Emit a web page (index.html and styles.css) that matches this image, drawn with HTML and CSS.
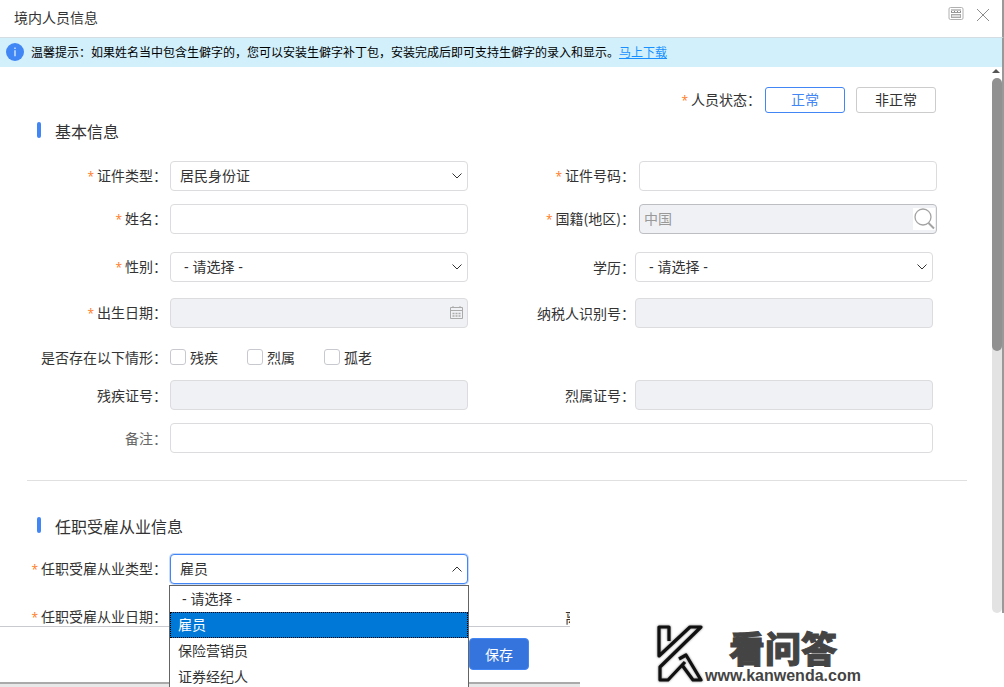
FILE: index.html
```html
<!DOCTYPE html>
<html lang="zh-CN">
<head>
<meta charset="utf-8">
<title>境内人员信息</title>
<link rel="stylesheet" href="styles.css">
</head>
<body>
<div class="dialog">
  <header class="titlebar">
    <h1 class="titlebar-text">境内人员信息</h1>
    <button class="icon-btn" type="button" aria-label="还原">
      <svg width="16" height="14" viewBox="0 0 16 14" fill="none"><rect x="1" y=".5" width="14" height="12" rx="1.5" stroke="#b0b0b0"/><path d="M3 3h10" stroke="#888"/><path d="M3 4.500h10" stroke="#888" stroke-dasharray="1 2"/><path d="M3 5.500h10" stroke="#999"/><rect x="3.500" y="7.500" width="9" height="3" fill="#ddd" stroke="#aaa"/></svg>
    </button>
    <button class="icon-btn" type="button" aria-label="关闭">
      <svg width="14" height="14" viewBox="0 0 14 14" fill="none" stroke="#8c8c8c"><path d="M1 1l12 12M13 1L1 13"/></svg>
    </button>
  </header>
  <div class="tip">
    <svg width="18" height="18" viewBox="0 0 18 18"><circle cx="9" cy="9" r="9" fill="#4086f4"/><path d="M8.3 4.5h1.4v1.5H8.3zM8.3 7.3h1.4v6H8.3z" fill="#d4e6ff"/></svg>
    <p class="tip-text">温馨提示：如果姓名当中包含生僻字的，您可以安装生僻字补丁包，安装完成后即可支持生僻字的录入和显示。<a class="tip-link" href="#">马上下载</a></p>
  </div>
  <div class="body">
    <form class="form" id="person">
      <div class="status">
        <span class="label-text"><i class="star">*</i>人员状态：</span>
        <button class="toggle toggle-on" type="button">正常</button>
        <button class="toggle" type="button">非正常</button>
      </div>
      <h2 class="section">基本信息</h2>
      <div class="row row-wide">
        <label class="label" for="idtype"><i class="star">*</i>证件类型：</label>
        <select class="control select" id="idtype"><option>居民身份证</option></select>
        <label class="label" for="idno"><i class="star">*</i>证件号码：</label>
        <input class="control" id="idno" type="text">
      </div>
      <div class="row row-wide row-loose">
        <label class="label" for="name"><i class="star">*</i>姓名：</label>
        <input class="control" id="name" type="text">
        <label class="label" for="country"><i class="star">*</i>国籍(地区)：</label>
        <div class="with-icon">
          <input class="control control-lookup" id="country" type="text" value="中国" disabled>
          <button class="lookup" type="button" aria-label="查找"><svg width="22" height="22" viewBox="0 0 22 22" fill="none" stroke="#a3a3a3"><circle cx="10" cy="9" r="8" stroke-width="1.3"/><path d="M15.500 15l5.500 5.500" stroke-width="2"/></svg></button>
        </div>
      </div>
      <div class="row row-medium">
        <label class="label" for="sex"><i class="star">*</i>性别：</label>
        <select class="control select" id="sex"><option>&nbsp;- 请选择 -</option></select>
        <label class="label" for="edu">学历：</label>
        <select class="control select" id="edu"><option>&nbsp;- 请选择 -</option></select>
      </div>
      <div class="row row-loose">
        <label class="label" for="birth"><i class="star">*</i>出生日期：</label>
        <div class="with-icon">
          <input class="control" id="birth" type="text" disabled>
          <svg class="calendar" width="13" height="13" viewBox="0 0 13 13" fill="none" stroke="#aaa"><path d="M.5 1.500h12v11H.5zM.5 4.500h12" /><path d="M3 0v2M10 0v2"/><path d="M2.500 7.500h8M2.500 10h8" stroke-width="1.500" stroke-dasharray="2 1"/></svg>
        </div>
        <label class="label" for="tax">纳税人识别号：</label>
        <input class="control" id="tax" type="text" disabled>
      </div>
      <div class="row">
        <span class="label">是否存在以下情形：</span>
        <div class="checks">
          <label class="check"><input class="box" type="checkbox">残疾</label>
          <label class="check"><input class="box" type="checkbox">烈属</label>
          <label class="check"><input class="box" type="checkbox">孤老</label>
        </div>
      </div>
      <div class="row">
        <label class="label" for="disno">残疾证号：</label>
        <input class="control" id="disno" type="text" disabled>
        <label class="label" for="marno">烈属证号：</label>
        <input class="control" id="marno" type="text" disabled>
      </div>
      <div class="row">
        <label class="label label-soft" for="memo">备注：</label>
        <input class="control control-full" id="memo" type="text">
      </div>
      <hr class="divider">
      <h2 class="section section-job">任职受雇从业信息</h2>
      <div class="row row-job">
        <label class="label" for="job"><i class="star">*</i>任职受雇从业类型：</label>
        <div class="with-icon">
          <select class="control select select-open" id="job"><option>雇员</option></select>
          <ul class="menu" role="listbox">
            <li class="option" role="option">&nbsp;- 请选择 -</li>
            <li class="option option-on" role="option" aria-selected="true">雇员</li>
            <li class="option" role="option">保险营销员</li>
            <li class="option" role="option">证券经纪人</li>
          </ul>
        </div>
      </div>
      <div class="row">
        <span class="label"><i class="star">*</i>任职受雇从业日期：</span>
        <div></div>
        <span class="cut">离</span>
      </div>
    </form>
    <div class="scrollbar"><span class="scroll-up"></span><span class="thumb"></span></div>
  </div>
  <footer class="footer">
    <button class="save" type="submit" form="person">保存</button>
  </footer>
  <div class="under"></div>
  <div class="brand">
    <svg class="brand-mark" width="49" height="62" viewBox="0 0 49 62" fill="none" stroke="#111" stroke-width="3.200" stroke-linejoin="round"><path d="M14 19V5H4v29L35 5h11L5 45v13h8l17-18"/><path d="M24 37l7-4 15 25h-8L27 43"/></svg>
    <div class="brand-words"><strong class="brand-name">看问答</strong><span class="brand-url">www.kanwenda.com</span></div>
  </div>
</div>
</body>
</html>
```
FILE: styles.css
```css
* { box-sizing: border-box; }
body {
  margin: 0;
  font: 14px/20px "Noto Sans CJK SC", sans-serif;
  color: #333;
  background: #fff;
}
button, input, select { font: inherit; color: inherit; }
.dialog {
  position: relative;
  display: flex;
  flex-direction: column;
  height: 100vh;
  overflow: hidden;
}
.titlebar {
  display: flex;
  align-items: flex-start;
  gap: 12px;
  height: 38px;
  flex: none;
  padding: 7px 12px 0 14px;
  border-right: 2px solid #999;
  border-bottom: 1px solid #d3dde2;
}
.titlebar-text { flex: 1; margin: 0; font-size: 14px; font-weight: 400; }
.icon-btn { display: flex; padding: 0; border: 0; background: none; }
.icon-btn + .icon-btn { padding-top: 1px; }
.tip {
  display: flex;
  align-items: center;
  gap: 7px;
  flex: none;
  height: 29px;
  padding: 0 6px 2px;
  border-right: 2px solid #999;
  background: #d2f0fc;
}
.tip-text { margin: 0; font-size: 12px; color: #000; }
.tip-link { color: #1890ff; }
.body { display: flex; flex: 1; min-height: 0; }
.form { flex: 1; padding-top: 20px; }
.status {
  display: flex;
  align-items: center;
  justify-content: flex-end;
  padding-right: 56px;
}
.toggle {
  width: 80px;
  height: 26px;
  margin-left: 11px;
  padding: 0 0 2px;
  border: 1px solid #ccc;
  border-radius: 3px;
  background: #fff;
  line-height: 20px;
}
.toggle-on { margin-left: 4px; border-color: #4285f4; color: #4285f4; }
.star { margin-right: 3px; font-style: normal; font-family: "Open Sans", sans-serif; font-size: 12px; color: #ff7a1a; }
.section {
  display: flex;
  align-items: center;
  gap: 14px;
  margin: 5px 0 17px 37px;
  font-size: 16px;
  line-height: 26px;
  font-weight: 400;
}
.section-job { margin-bottom: 15px; }
.section::before { content: ""; width: 4px; height: 16px; margin-bottom: 2px; border-radius: 2px; background: #4285f4; }
.row {
  display: grid;
  grid-template-columns: 170px 1fr 167px 1fr;
  align-items: center;
  margin-bottom: 13px;
  padding-right: 59px;
}
.row-wide { grid-template-columns: 170px 1fr 171px 1fr; padding-right: 55px; }
.row-loose { margin-bottom: 18px; }
.row-medium { margin-bottom: 16px; }
.label { padding-right: 3px; text-align: right; white-space: nowrap; }
.control ~ .label, .with-icon ~ .label { padding-right: 0; }
.row-wide .control ~ .label { padding-right: 4px; }
.label-soft { color: #666; }
.control {
  display: block;
  width: 100%;
  height: 30px;
  min-width: 0;
  padding: 0 9px;
  border: 1px solid #dcdcde;
  border-radius: 4px;
  background: #fff;
}
.control:disabled { background: #f0f1f5; }
.control-full { grid-column: 2 / 5; }
.control-lookup:disabled { padding: 0 4px 2px; border-color: #bdbec2; color: #999; }
.select {
  appearance: none;
  font-family: "Liberation Sans", "Noto Sans CJK SC", sans-serif;
  background: #fff url("data:image/svg+xml,%3Csvg xmlns='http://www.w3.org/2000/svg' width='10' height='6' fill='none' stroke='%23333'%3E%3Cpath d='M.5 .5L5 5L9.500 .5'/%3E%3C/svg%3E") no-repeat right 5px center;
}
.select-open {
  border-color: #4285f4;
  box-shadow: 0 0 0 1px #c6dafb;
  background-image: url("data:image/svg+xml,%3Csvg xmlns='http://www.w3.org/2000/svg' width='10' height='6' fill='none' stroke='%23333'%3E%3Cpath d='M.5 5.500L5 1L9.500 5.500'/%3E%3C/svg%3E");
}
.with-icon { position: relative; }
.lookup { position: absolute; right: 2px; top: 4px; display: flex; padding: 0; border: 0; background: #fff; }
.calendar { position: absolute; right: 5px; top: 8px; }
.checks { display: flex; gap: 29px; }
.check { display: flex; align-items: center; gap: 4px; height: 21px; white-space: nowrap; }
.box { appearance: none; width: 16px; height: 16px; margin: 0; border: 1px solid #c8c9cf; border-radius: 3px; }
.divider { margin: 27px 25px 32px 27px; border: 0; border-top: 1px solid #e0e0e0; }
.row-job { margin-bottom: 22px; }
.menu {
  position: absolute;
  z-index: 5;
  top: 31px;
  left: -1px;
  right: -1px;
  margin: 0;
  padding: 0;
  border: 1px solid #646464;
  background: #fff;
  font-family: "Liberation Sans", "Noto Sans CJK SC", sans-serif;
  list-style: none;
}
.option { padding: 3px 8px; }
.option-on { color: #fff; background: #0078d7; outline: 1px dotted #000; outline-offset: -1px; }
.cut { width: 5px; margin-left: 97px; overflow: hidden; }
.scrollbar { flex: none; width: 12px; padding-top: 2px; border-right: 2px solid #999; background: #fff; }
.scroll-up { display: block; height: 4px; margin: 0 2px 5px 0; background: #555; clip-path: polygon(50% 0, 100% 100%, 0 100%); }
.thumb { display: block; height: 273px; border-radius: 5px; background: #919191; box-shadow: 0 262px 0 #e3e3e3; }
.footer {
  flex: none;
  height: 56px;
  padding: 11px 0 0 469px;
  border-top: 1px solid #c9cad0;
  background: #fff;
}
.save { width: 60px; height: 32px; padding: 0; border: 1px solid #4285f4; border-radius: 4px; background: #3574dc; color: #fff; }
.under { position: relative; z-index: 1; flex: none; width: 580px; height: 5px; border-top: 2px solid #aaa; background: #e8e8e8; }
.brand {
  position: absolute;
  right: 0;
  bottom: 0;
  left: 570px;
  display: flex;
  gap: 1px;
  height: 74px;
  padding: 9px 0 0 85px;
  background: #fff;
}
.brand-mark { flex: none; filter: drop-shadow(0 0 1px #777); }
.brand-words { display: flex; flex-direction: column; padding-top: 5px; color: #444; }
.brand-name { margin-left: 24px; font-size: 36px; line-height: 40px; font-weight: 900; -webkit-text-stroke: 1px #444; }
.brand-url { font: bold 16px/18px "Liberation Sans", sans-serif; }
```
